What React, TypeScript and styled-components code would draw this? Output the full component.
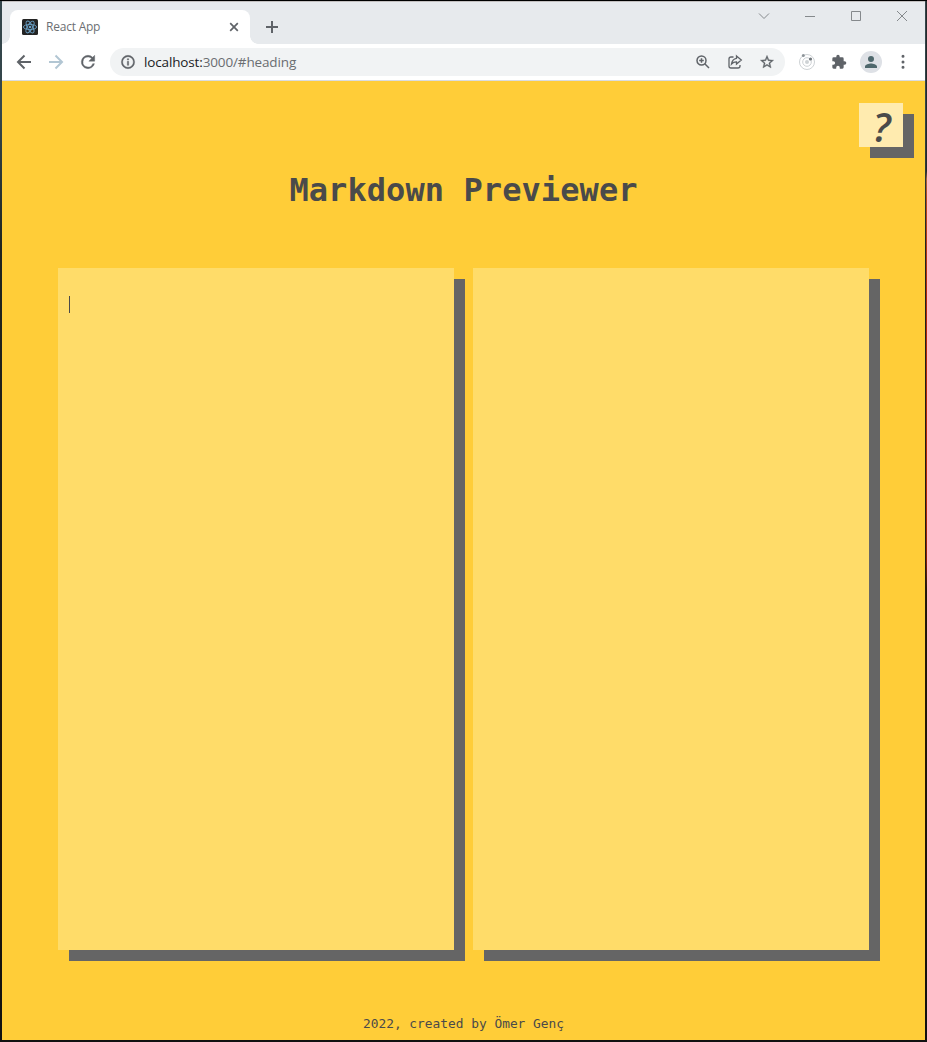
import React from "react";
import styled, { createGlobalStyle } from "styled-components";

const GlobalStyle = createGlobalStyle`
  * { box-sizing: border-box; }
  body { margin: 0; background: #1c1c18; }
`;

const Window = styled.div`
  width: 927px;
  height: 1042px;
  display: flex;
  flex-direction: column;
  padding: 1px 2px 2px;
  background:
    linear-gradient(#26282a 0 170px, #a8623c 178px, #b5481f 200px, #b02a0c 300px 500px, #8a2008 560px, #241505 590px, #111 100%) right / 1px 1041px no-repeat,
    linear-gradient(#000 0 1px, #34464b 1px 110px, #20241f 250px, #241505 800px, #111 100%);
  font-family: "Open Sans", "Noto Sans", sans-serif;
  overflow: hidden;
`;

const TabStrip = styled.div`
  height: 43px;
  flex: none;
  display: flex;
  align-items: flex-end;
  background: #e7eaed;
  border-top: 1px solid #c3c0c0;
`;

const Tab = styled.div`
  position: relative;
  width: 240px;
  height: 34px;
  margin-left: 8px;
  padding: 0 10px 0 12px;
  display: flex;
  align-items: center;
  background: #fff;
  border-radius: 8px 8px 0 0;
  &::before, &::after {
    content: "";
    position: absolute;
    bottom: 0;
    width: 8px;
    height: 8px;
  }
  &::before { left: -8px; background: radial-gradient(circle at 0 0, transparent 7.5px, #fff 8px); }
  &::after { right: -8px; background: radial-gradient(circle at 100% 0, transparent 7.5px, #fff 8px); }
`;

const TabTitle = styled.span`
  flex: 1;
  margin-left: 8px;
  font-size: 12px;
  line-height: 16px;
  letter-spacing: -0.22px;
  color: #6c6f73;
`;

const NewTab = styled.div`
  width: 28px;
  height: 34px;
  margin-left: 8px;
  display: flex;
  align-items: center;
  justify-content: center;
`;

const WindowControls = styled.div`
  align-self: flex-start;
  margin-left: auto;
  height: 28px;
  display: flex;
`;

const Control = styled.div`
  width: 46px;
  height: 28px;
  display: flex;
  align-items: center;
  justify-content: center;
`;

const Toolbar = styled.div`
  height: 37px;
  flex: none;
  display: flex;
  align-items: center;
  padding: 0 6px 0 6px;
  background: #fff;
  border-bottom: 1px solid #dadce0;
`;

const ToolButton = styled.div`
  width: 32px;
  height: 32px;
  flex: none;
  display: flex;
  align-items: center;
  justify-content: center;
`;

const AddressBar = styled.div`
  width: 675px;
  height: 28px;
  margin: 0 6px 0 6px;
  padding: 0 2px;
  display: flex;
  align-items: center;
  border-radius: 14px;
  background: #f1f3f4;
`;

const Url = styled.span`
  flex: 1;
  font-size: 13.5px;
  line-height: 20px;
  letter-spacing: -0.14px;
  color: #6a6d71;
  white-space: nowrap;
`;

const Host = styled.span`
  color: #202124;
`;

const Avatar = styled.div`
  width: 22px;
  height: 22px;
  border-radius: 50%;
  background: #dee1e6;
  display: flex;
  align-items: center;
  justify-content: center;
`;

const Page = styled.main`
  flex: 1;
  display: flex;
  flex-direction: column;
  background: #ffcd38;
  color: #4a4a4a;
  font-family: "DejaVu Sans Mono", monospace;
`;

const HelpButton = styled.button`
  align-self: flex-end;
  width: 44px;
  height: 44px;
  margin: 22px 22px 0 0;
  padding: 4px 0 0 1px;
  border: 0;
  background: #ffebaf;
  box-shadow: 11px 11px #656565;
  color: #4a4a4a;
  font: italic 600 40px/40px "Open Sans", sans-serif;
`;

const Title = styled.h1`
  margin: 23px 0 0;
  height: 40px;
  text-align: center;
  font-size: 32px;
  line-height: 40px;
  letter-spacing: 0.08px;
`;

const Panels = styled.div`
  display: flex;
  gap: 19px;
  margin: 58px 56px 0;
`;

const Editor = styled.section`
  width: 396px;
  height: 682px;
  padding: 28px 11px;
  background: #ffdc69;
  box-shadow: 11px 11px #656565;
`;

const Caret = styled.div`
  width: 1px;
  height: 17px;
  background: #4a4a4a;
`;

const Footer = styled.footer`
  margin-top: 65px;
  text-align: center;
  font-size: 12.85px;
  line-height: 18px;
`;

const ink = "#5f6368";

const ReactLogo = () => (
  <svg width="16" height="16" viewBox="0 0 16 16" fill="none" stroke="#6a9fc4" strokeWidth=".9">
    <rect width="16" height="16" rx="1.5" fill="#242424" stroke="none" />
    <ellipse cx="8" cy="8" rx="6.6" ry="2.6" />
    <ellipse cx="8" cy="8" rx="6.6" ry="2.6" transform="rotate(60 8 8)" />
    <ellipse cx="8" cy="8" rx="6.6" ry="2.6" transform="rotate(120 8 8)" />
    <circle cx="8" cy="8" r="1.3" fill="#6a9fc4" stroke="none" />
  </svg>
);

const Material = ({ d, size = 20, color = ink, stroke = 0 }: { d: string; size?: number; color?: string; stroke?: number }) => (
  <svg width={size} height={size} viewBox="0 0 24 24" fill={color} stroke={color} strokeWidth={stroke}>
    <path d={d} />
  </svg>
);

const Line = ({ d, size, width = 1, color = ink }: { d: string; size: number; width?: number; color?: string }) => (
  <svg width={size} height={size} viewBox={`0 0 ${size} ${size}`} fill="none" stroke={color} strokeWidth={width}>
    <path d={d} />
  </svg>
);

export default function App() {
  return (
    <>
      <GlobalStyle />
      <Window>
        <TabStrip>
          <Tab>
            <ReactLogo />
            <TabTitle>React App</TabTitle>
            <Line size={12} width={1.7} d="M2.2 2.2L9.8 9.8M9.8 2.2L2.2 9.8" />
          </Tab>
          <NewTab><Line size={12} width={2} d="M6 0V12M0 6H12" /></NewTab>
          <WindowControls>
            <Control><Line size={12} color="#85898c" d="M1 3.5L6 8.5L11 3.5" /></Control>
            <Control><Line size={10} color="#85898c" d="M0 5.5H10" /></Control>
            <Control><Line size={10} color="#85898c" d="M.5 .5H9.5V9.5H.5Z" /></Control>
            <Control><Line size={10} color="#85898c" d="M0 0L10 10M10 0L0 10" /></Control>
          </WindowControls>
        </TabStrip>
        <Toolbar>
          <ToolButton><Line size={16} width={2} d="M15 8H2M8.5 1.5L2 8L8.5 14.5" /></ToolButton>
          <ToolButton><Line size={16} width={2} color="#b2c6d3" d="M1 8H14M7.5 1.5L14 8L7.5 14.5" /></ToolButton>
          <ToolButton>
            <Material size={20} stroke={0.5} d="M17.65 6.35A7.96 7.96 0 0 0 12 4a8 8 0 1 0 7.73 10h-2.08A6 6 0 1 1 12 6c1.66 0 3.14.69 4.22 1.78L13 11h7V4z" />
          </ToolButton>
          <AddressBar>
            <ToolButton>
              <Material size={16} stroke={0.6} d="M11 7h2v2h-2zm0 4h2v6h-2zM12 2a10 10 0 1 0 0 20 10 10 0 0 0 0-20zm0 18a8 8 0 1 1 0-16 8 8 0 0 1 0 16z" />
            </ToolButton>
            <Url><Host>localhost:</Host>3000/#heading</Url>
            <ToolButton><Line size={16} width={1.5} d="M11 6.5A4.5 4.5 0 1 1 2 6.5A4.5 4.5 0 1 1 11 6.5ZM10 10L14 14M6.5 4.2V8.8M4.2 6.5H8.8" /></ToolButton>
            <ToolButton><Line size={16} width={1.3} d="M6.5 3H4Q2 3 2 5V12Q2 14 4 14H11Q13 14 13 12V11M9.5 2L14.3 6L9.5 10V7.8Q6.5 7.7 4.5 10Q5.2 5 9.5 4.3Z" /></ToolButton>
            <ToolButton>
              <Material size={16} stroke={0.5} d="M22 9.24l-7.19-.62L12 2 9.19 8.63 2 9.24l5.46 4.73L5.82 21 12 17.27 18.18 21l-1.63-7.03L22 9.24zM12 15.4l-3.76 2.27 1-4.28-3.32-2.88 4.38-.38L12 6.1l1.71 4.04 4.38.38-3.32 2.88 1 4.28L12 15.4z" />
            </ToolButton>
          </AddressBar>
          <ToolButton>
            <svg width="18" height="18" viewBox="0 0 18 18" fill="none" stroke="#ced2d5">
              <circle cx="9" cy="9" r="7.5" /><circle cx="9" cy="9" r="4.3" />
              <circle cx="9" cy="9" r="2" fill="#ced2d5" stroke="none" />
              <circle cx="5.3" cy="2.5" r="1.5" fill="#8d9499" stroke="none" />
              <circle cx="12.5" cy="6" r="1.6" fill="#70777c" stroke="none" />
            </svg>
          </ToolButton>
          <ToolButton>
            <Material size={16} d="M20.5 11H19V7a2 2 0 0 0-2-2h-4V3.5a2.5 2.5 0 0 0-5 0V5H4a2 2 0 0 0-2 2v3.8h1.5a2.7 2.7 0 0 1 0 5.4H2V20a2 2 0 0 0 2 2h3.8v-1.5a2.7 2.7 0 0 1 5.4 0V22H17a2 2 0 0 0 2-2v-4h1.5a2.5 2.5 0 0 0 0-5z" />
          </ToolButton>
          <ToolButton>
            <Avatar>
              <Material size={18} color="#4f686d" d="M12 12a4 4 0 1 0 0-8 4 4 0 0 0 0 8zm0 2c-2.67 0-8 1.34-8 4v2h16v-2c0-2.66-5.33-4-8-4z" />
            </Avatar>
          </ToolButton>
          <ToolButton>
            <Material size={20} d="M12 7a1.8 1.8 0 1 0 0-3.6 1.8 1.8 0 0 0 0 3.6zm0 3.2a1.8 1.8 0 1 0 0 3.6 1.8 1.8 0 0 0 0-3.6zm0 6.4a1.8 1.8 0 1 0 0 3.6 1.8 1.8 0 0 0 0-3.6z" />
          </ToolButton>
        </Toolbar>
        <Page>
          <HelpButton>?</HelpButton>
          <Title>Markdown Previewer</Title>
          <Panels>
            <Editor><Caret /></Editor>
            <Editor />
          </Panels>
          <Footer>2022, created by Ömer Genç</Footer>
        </Page>
      </Window>
    </>
  );
}
